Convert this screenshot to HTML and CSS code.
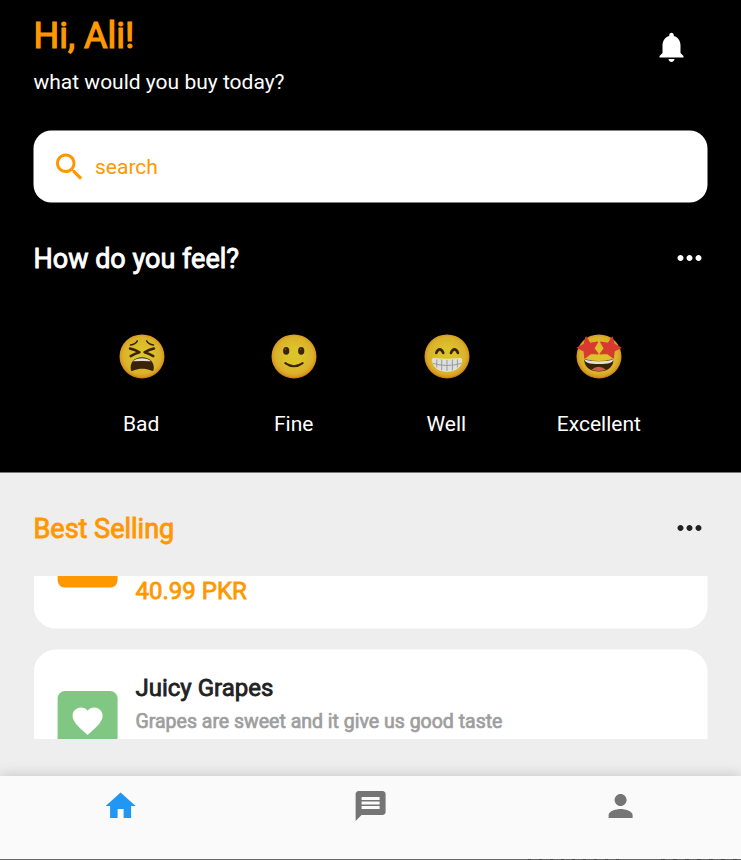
FILE: index.html
```html
<!DOCTYPE html>
<html lang="en">
<head>
<meta charset="utf-8">
<title>Fruit shop</title>
<link rel="stylesheet" href="styles.css">
</head>
<body>
<svg class="defs" width="0" height="0">
  <defs>
    <radialGradient id="face" cx=".5" cy=".48" r=".52">
      <stop offset=".35" stop-color="#dcc32a"/>
      <stop offset=".8" stop-color="#dab12b"/>
      <stop offset=".92" stop-color="#d69a1e"/>
      <stop offset="1" stop-color="#c9780a"/>
    </radialGradient>
  </defs>
</svg>
<header class="hero">
  <div class="greeting">
    <div>
      <h1 class="hello">Hi, Ali!</h1>
      <p class="prompt">what would you buy today?</p>
    </div>
    <svg class="icon bell" viewBox="0 0 24 24"><path d="M12 22c1.1 0 2-.9 2-2h-4c0 1.1.9 2 2 2zm6-6v-5c0-3.07-1.63-5.64-4.5-6.32V4c0-.83-.67-1.5-1.5-1.5s-1.5.67-1.5 1.5v.68C7.64 5.36 6 7.92 6 11v5l-2 2v1h16v-1l-2-2z"/></svg>
  </div>
  <div class="search">
    <svg class="icon" viewBox="0 0 24 24"><path d="M15.5 14h-.79l-.28-.27C15.41 12.59 16 11.11 16 9.5 16 5.91 13.09 3 9.5 3S3 5.91 3 9.5 5.91 16 9.5 16c1.61 0 3.09-.59 4.23-1.57l.27.28v.79l5 4.99L20.49 19l-4.99-5zm-6 0C7.01 14 5 11.99 5 9.5S7.01 5 9.5 5 14 7.01 14 9.5 11.99 14 9.5 14z"/></svg>
    <span>search</span>
  </div>
  <div class="section-head">
    <h2 class="title">How do you feel?</h2>
    <svg class="icon" viewBox="0 0 24 24"><path d="M6 10c-1.1 0-2 .9-2 2s.9 2 2 2 2-.9 2-2-.9-2-2-2zm12 0c-1.1 0-2 .9-2 2s.9 2 2 2 2-.9 2-2-.9-2-2-2zm-6 0c-1.1 0-2 .9-2 2s.9 2 2 2 2-.9 2-2-.9-2-2-2z"/></svg>
  </div>
  <div class="moods">
    <div class="mood">
      <svg class="emoji" viewBox="0 0 46 46">
        <ellipse cx="23" cy="23" rx="22.5" ry="22" fill="url(#face)"/>
        <g fill="none" stroke="#3b2207" stroke-linecap="round" stroke-linejoin="round">
          <path d="M11.5 11.5q5-.5 6.800-4M34.500 11.500q-5-.5-6.800-4" stroke-width="1.500"/>
          <path d="M11 15q5 1 9.500 3.800q-4.500 1.200-8.800 3.900M35 15q-5 1-9.500 3.800q4.500 1.200 8.800 3.900" stroke-width="2.500"/>
        </g>
        <path d="M12 37C10.300 29 15.500 23.800 23 23.800S36.300 29 34.600 36.700C34.300 37.900 33 37.800 32 37.200C26.500 34.800 20 34.800 14.600 37.200Q12.500 38.100 12 37z" fill="#3b2207"/>
        <path d="M13.800 27.800C18 23.800 28 23.800 32.200 27.800Q23 27.200 13.800 27.800z" fill="#ddd"/>
      </svg>
      <span>Bad</span>
    </div>
    <div class="mood">
      <svg class="emoji" viewBox="0 0 46 46">
        <ellipse cx="23" cy="23" rx="22.5" ry="22" fill="url(#face)"/>
        <ellipse cx="15.2" cy="17.5" rx="3.1" ry="3.8" fill="#3b2207"/>
        <ellipse cx="30.2" cy="17.5" rx="3.1" ry="3.8" fill="#3b2207"/>
        <circle cx="14.5" cy="16" r=".8" fill="#745525"/><circle cx="29.5" cy="16" r=".8" fill="#745525"/>
        <path d="M14.3 29.7Q22.9 36 31.7 29.7" fill="none" stroke="#3b2207" stroke-width="2" stroke-linecap="round"/>
      </svg>
      <span>Fine</span>
    </div>
    <div class="mood">
      <svg class="emoji" viewBox="0 0 46 46">
        <ellipse cx="23" cy="23" rx="22.5" ry="22" fill="url(#face)"/>
        <path d="M12.3 19.5C14 14.7 17.5 14.7 19.2 19.5M27 19.5C28.7 14.7 32.2 14.7 33.9 19.5" fill="none" stroke="#3b2207" stroke-width="2.7" stroke-linecap="round"/>
        <path d="M8.3 26.5Q8.3 24.6 10.3 25Q23 26.8 35.7 25Q37.9 24.6 37.7 27C37.2 34.2 31 38 23 38S8.9 34.2 8.3 26.5z" fill="#dedede" stroke="#eee" stroke-width=".6"/>
        <path d="M9 30Q23 34.2 37 30M23 26.5V37.5M17.7 26.3V37M28.4 26.3V37M12.8 26V34M33.4 26V34" fill="none" stroke="#9b9b9b" stroke-width="1"/>
      </svg>
      <span>Well</span>
    </div>
    <div class="mood">
      <svg class="emoji" viewBox="0 0 46 46">
        <ellipse cx="23" cy="23" rx="22.5" ry="22" fill="url(#face)"/>
        <path d="M8.3 27.5Q8.3 25.8 10.2 26.2Q23 29.2 35.5 26.2Q37.5 25.8 37.3 28C36.5 34 31 38 23 38S9 34 8.3 27.5z" fill="#3b2207"/>
        <path d="M8.8 26.4Q23 29.5 37 26.4C37 29.3 33 30.6 23 30.6S9 29.3 8.8 26.4z" fill="#e0e0e0"/>
        <path d="M15.5 36.3Q22.5 30.5 30 36.3Q23 39 15.5 36.3z" fill="#cb5f52"/>
        <g fill="#d93a30" stroke="#d93a30" stroke-width="1" stroke-linejoin="round">
          <path transform="translate(-1.6 -1.300) scale(1.140)" d="M10.200 4.300l3.500 5.500 6.600-1-3.200 5.500 3.700 4.800-6.400-.3-5.200 4-.8-6.300-5.800-2.700 5.900-3.200z"/>
          <path transform="translate(-4.600 -1.300) scale(1.140)" d="M35.800 4.300l-3.500 5.500-6.600-1 3.200 5.500-3.700 4.800 6.400-.3 5.200 4 .8-6.300 5.800-2.700-5.900-3.200z"/>
        </g>
      </svg>
      <span>Excellent</span>
    </div>
  </div>
</header>
<main class="products">
  <div class="section-head">
    <h2 class="title accent">Best Selling</h2>
    <svg class="icon" viewBox="0 0 24 24"><path d="M6 10c-1.1 0-2 .9-2 2s.9 2 2 2 2-.9 2-2-.9-2-2-2zm12 0c-1.1 0-2 .9-2 2s.9 2 2 2 2-.9 2-2-.9-2-2-2zm-6 0c-1.1 0-2 .9-2 2s.9 2 2 2 2-.9 2-2-.9-2-2-2z"/></svg>
  </div>
  <div class="list">
    <article class="card">
      <div class="thumb orange"></div>
      <div class="info"><p class="price">40.99 PKR</p></div>
    </article>
    <article class="card">
      <div class="thumb green">
        <svg class="icon heart" viewBox="0 0 24 24"><path d="M12 21.35l-1.45-1.32C5.4 15.36 2 12.28 2 8.5 2 5.42 4.42 3 7.5 3c1.74 0 3.41.81 4.5 2.09C13.09 3.81 14.76 3 16.5 3 19.58 3 22 5.42 22 8.5c0 3.78-3.4 6.86-8.55 11.54L12 21.35z"/></svg>
      </div>
      <div class="info">
        <h3 class="name">Juicy Grapes</h3>
        <p class="desc">Grapes are sweet and it give us good taste</p>
      </div>
    </article>
  </div>
</main>
<nav class="tabs">
  <svg class="icon active" viewBox="0 0 24 24"><path d="M10 20v-6h4v6h5v-8h3L12 3 2 12h3v8z"/></svg>
  <svg class="icon" viewBox="0 0 24 24"><path d="M20 2H4c-1.1 0-1.99.9-1.99 2L2 22l4-4h14c1.1 0 2-.9 2-2V4c0-1.1-.9-2-2-2zm-2 12H6v-2h12v2zm0-3H6V9h12v2zm0-3H6V6h12v2z"/></svg>
  <svg class="icon" viewBox="0 0 24 24"><path d="M12 12c2.21 0 4-1.79 4-4s-1.79-4-4-4-4 1.79-4 4 1.79 4 4 4zm0 2c-2.67 0-8 1.34-8 4v2h16v-2c0-2.66-5.33-4-8-4z"/></svg>
</nav>
<div class="edge"></div>
</body>
</html>
```
FILE: styles.css
```css
* { box-sizing: border-box; margin: 0; padding: 0; }
body {
  width: 741px;
  height: 860px;
  overflow: hidden;
  display: flex;
  flex-direction: column;
  background: #eee;
  font-family: Roboto, sans-serif;
  font-size: 21px;
  font-weight: 400;
}
h1, h2, h3 { font-weight: 400; }
.defs { position: absolute; }
.icon { width: 36px; height: 36px; flex: none; fill: currentColor; display: block; }

.hero {
  height: 473px;
  flex: none;
  padding: 15px 33.5px 0;
  background: #000;
  border-bottom: 1px solid #777;
  color: #fff;
}
.greeting { height: 115.5px; display: flex; justify-content: space-between; }
.hello {
  font-size: 36px;
  line-height: 42px;
  color: #ff9800;
  -webkit-text-stroke: 1.2px #ff9800;
}
.prompt { margin-top: 13px; line-height: 25px; }
.bell { margin: 14.3px 18px 0 0; transform: translate(-.5px, 0); }
.search {
  height: 72px;
  display: flex;
  align-items: center;
  gap: 8px;
  padding-left: 18px;
  border-radius: 18px;
  background: #fff;
  color: #ff9800;
  transform: translate(-.5px, -.5px);
}
.search .icon { transform: translateY(.5px); }
.section-head { height: 36px; display: flex; align-items: center; justify-content: space-between; }
.section-head .icon { transform: translateX(-.5px); }
.hero .section-head { margin-top: 37.5px; }
.title {
  padding-top: 2px;
  font-size: 27px;
  line-height: 36px;
  -webkit-text-stroke: .9px currentColor;
}
.accent { color: #ff9800; }
.moods {
  display: grid;
  grid-template-columns: repeat(4, 152.6px);
  justify-content: center;
  margin-top: 57px;
  transform: translateX(-.5px);
}
.mood { display: flex; flex-direction: column; align-items: center; gap: 33px; line-height: 25px; }
.emoji { width: 46px; height: 46px; display: block; transform: translate(.5px, .4px); }

.products { height: 303px; flex: none; padding: 37px 33.5px 0; color: #212121; }
.list {
  height: 163px;
  margin-top: 30px;
  overflow: hidden;
  display: flex;
  flex-direction: column;
  gap: 21px;
}
.card {
  flex: none;
  display: flex;
  gap: 18px;
  height: 142px;
  padding: 0 24px;
  border-radius: 22.5px;
  background: #fff;
  transform: translate(-.4px, -.4px);
}
.card:first-child { margin-top: -89.5px; }
.thumb {
  width: 60px;
  height: 60px;
  margin-top: 41px;
  border-radius: 7.5px;
  display: grid;
  place-items: center;
  color: #fff;
}
.orange { background: #ff9800; }
.green { background: #81c784; transform: translateY(.4px); }
.info { padding-top: 24px; transform: translateX(.4px); }
.card:first-child .info { padding-top: 90px; }
.price, .name { font-size: 24px; line-height: 28px; -webkit-text-stroke: .8px currentColor; }
.price { color: #ff9800; }
.desc {
  margin-top: 8px;
  font-size: 19.5px;
  line-height: 24px;
  color: #9e9e9e;
  -webkit-text-stroke: .7px currentColor;
}

.tabs {
  height: 83px;
  flex: none;
  display: flex;
  justify-content: center;
  gap: 214px;
  padding-top: 12px;
  background: #fafafa;
  box-shadow: 0 -1px 12px rgba(0, 0, 0, .17);
  color: #757575;
}
.tabs .icon { transform: translateX(-.4px); }
.active { color: #2196f3; }
.edge {
  height: 1px;
  flex: none;
  background:
    repeating-linear-gradient(90deg, #444 0 3px, #656565 3px 11px) 528px 0 / 94px 1px no-repeat,
    repeating-linear-gradient(90deg, #444 0 4px, #656565 4px 12px) 661px 0 / 80px 1px no-repeat,
    #656565;
}
```
